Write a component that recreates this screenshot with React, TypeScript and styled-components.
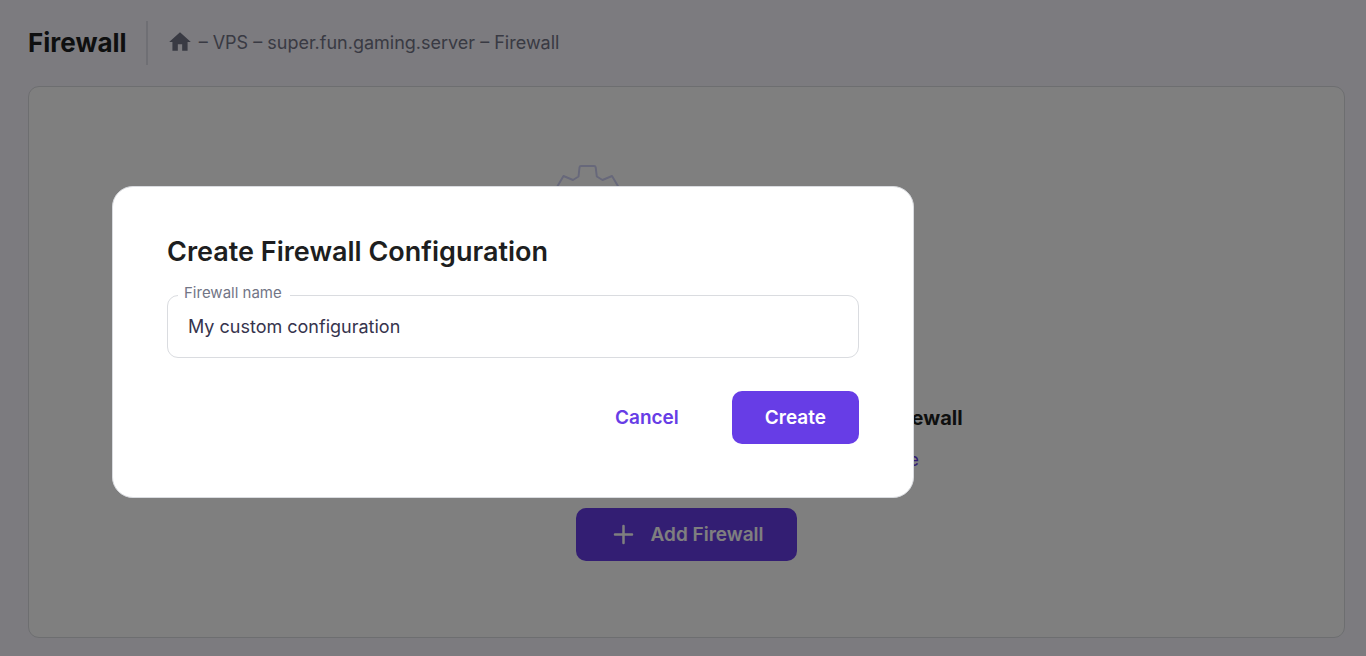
import React, { useId, useState } from "react";
import styled, { createGlobalStyle } from "styled-components";
import { MdHome } from "react-icons/md";

const GlobalStyle = createGlobalStyle`
  *, *::before, *::after { box-sizing: border-box; }
  body {
    margin: 0;
    background: #f8f6ff;
    color: #1d1e20;
    font-family: Inter, "Open Sans", sans-serif;
  }
`;

const Page = styled.div`
  display: flex;
  flex-direction: column;
  min-height: 100vh;
  padding: 0 21px 18px 28px;
`;

const Header = styled.header`
  display: flex;
  align-items: center;
  height: 86px;
`;

const PageTitle = styled.h1`
  margin: 0;
  padding-right: 19px;
  font-size: 26px;
  line-height: 44px;
  font-weight: 700;
  border-right: 2px solid #dfdfe8;
`;

const Breadcrumb = styled.nav`
  display: flex;
  align-items: center;
  gap: 6px;
  padding-left: 19px;
  font-size: 18px;
  line-height: 24px;
  color: #727586;
`;

const Crumb = styled.a`
  display: flex;
  padding-bottom: 2px;
  color: inherit;
  text-decoration: none;
`;

const HomeIcon = styled(MdHome)`
  width: 26px;
  height: 26px;
  color: #727586;
`;

const Card = styled.main`
  flex: 1;
  display: flex;
  flex-direction: column;
  align-items: center;
  justify-content: center;
  padding-top: 2px;
  background: #ffffff;
  border: 1px solid #dadce0;
  border-radius: 11px;
`;

const Illustration = styled.svg`
  display: block;
  width: 282px;
  height: 232px;
  margin-bottom: 8px;
`;

const EmptyTitle = styled.h2`
  margin: 0;
  font-size: 20px;
  line-height: 26px;
  font-weight: 700;
`;

const HelpLink = styled.a`
  margin: 17px 0 36px;
  font-size: 18px;
  line-height: 24px;
  color: #673de6;
  text-decoration: none;
`;

const Button = styled.button<{ $variant?: "solid" | "text" }>`
  display: inline-flex;
  align-items: center;
  justify-content: center;
  gap: 16px;
  height: 53px;
  padding: 0 33px;
  border: 0;
  border-radius: 10px;
  background: ${(p) => (p.$variant === "text" ? "transparent" : "#673de6")};
  color: ${(p) => (p.$variant === "text" ? "#673de6" : "#ffffff")};
  font-family: inherit;
  font-size: 19px;
  line-height: 24px;
  font-weight: 600;
  cursor: pointer;
`;

const PlusIcon = styled.svg`
  width: 21px;
  height: 21px;
  margin-left: 4px;
`;

const Backdrop = styled.div`
  position: fixed;
  inset: 0;
  padding: 186px 112px 0;
  background: rgba(0, 0, 0, 0.5);
`;

const Dialog = styled.form`
  width: 100%;
  max-width: 802px;
  padding: 47px 54px 53px;
  background: #ffffff;
  border: 1px solid #dadce0;
  border-radius: 21px;
`;

const DialogTitle = styled.h2`
  margin: 0 0 25px;
  font-size: 27px;
  line-height: 36px;
  font-weight: 600;
`;

const Field = styled.div`
  position: relative;
  border: 1px solid #dadce0;
  border-radius: 11px;
`;

const FieldLabel = styled.label`
  position: absolute;
  top: -13px;
  left: 10px;
  padding: 0 8px 0 6px;
  background: #ffffff;
  font-size: 15px;
  line-height: 20px;
  color: #727586;
`;

const TextInput = styled.input`
  display: block;
  width: 100%;
  height: 61px;
  padding: 0 20px;
  border: 0;
  outline: 0;
  border-radius: 11px;
  background: transparent;
  font-family: inherit;
  font-size: 18px;
  color: #36344d;
`;

const Actions = styled.div`
  display: flex;
  justify-content: flex-end;
  gap: 20px;
  margin-top: 33px;
`;

function GearIllustration() {
  return (
    <Illustration viewBox="0 0 282 232" fill="none" stroke="#cfd0f4" strokeWidth="2" strokeLinejoin="round" aria-hidden="true">
      <path d="M33.5 2.5Q33.7 1 35 1H48Q49.500 1 49.700 2.500L50.800 11.500L56.500 15L66 11L72.500 22L66 29V39L72 46L65 57L56 53L50 57L48 67H34L32 57L26 53L17 57L10 46L16 39V29L11 22L17.500 11L27 15L32.500 11.500Z" />
      <circle cx="41" cy="34" r="9" />
      <rect x="86" y="50" width="110" height="150" rx="12" />
    </Illustration>
  );
}

export default function App() {
  const nameId = useId();
  const titleId = useId();
  const [name, setName] = useState("My custom configuration");

  return (
    <>
      <GlobalStyle />
      <Page>
        <Header>
          <PageTitle>Firewall</PageTitle>
          <Breadcrumb aria-label="Breadcrumb">
            <Crumb href="#home" aria-label="Home">
              <HomeIcon />
            </Crumb>
            <span>– VPS – super.fun.gaming.server – Firewall</span>
          </Breadcrumb>
        </Header>
        <Card>
          <GearIllustration />
          <EmptyTitle>You do not have any configurations for your VPS Firewall</EmptyTitle>
          <HelpLink href="#help">Learn more about Firewall and how to configure it here</HelpLink>
          <Button type="button">
            <PlusIcon viewBox="0 0 21 21" fill="none" stroke="currentColor" strokeWidth="2.500" strokeLinecap="round" aria-hidden="true">
              <path d="M10.500 2V19M2 10.500H19" />
            </PlusIcon>
            Add Firewall
          </Button>
        </Card>
      </Page>
      <Backdrop>
        <Dialog role="dialog" aria-modal="true" aria-labelledby={titleId} onSubmit={(e) => e.preventDefault()}>
          <DialogTitle id={titleId}>Create Firewall Configuration</DialogTitle>
          <Field>
            <FieldLabel htmlFor={nameId}>Firewall name</FieldLabel>
            <TextInput id={nameId} type="text" value={name} onChange={(e) => setName(e.target.value)} />
          </Field>
          <Actions>
            <Button type="button" $variant="text">Cancel</Button>
            <Button type="submit">Create</Button>
          </Actions>
        </Dialog>
      </Backdrop>
    </>
  );
}
